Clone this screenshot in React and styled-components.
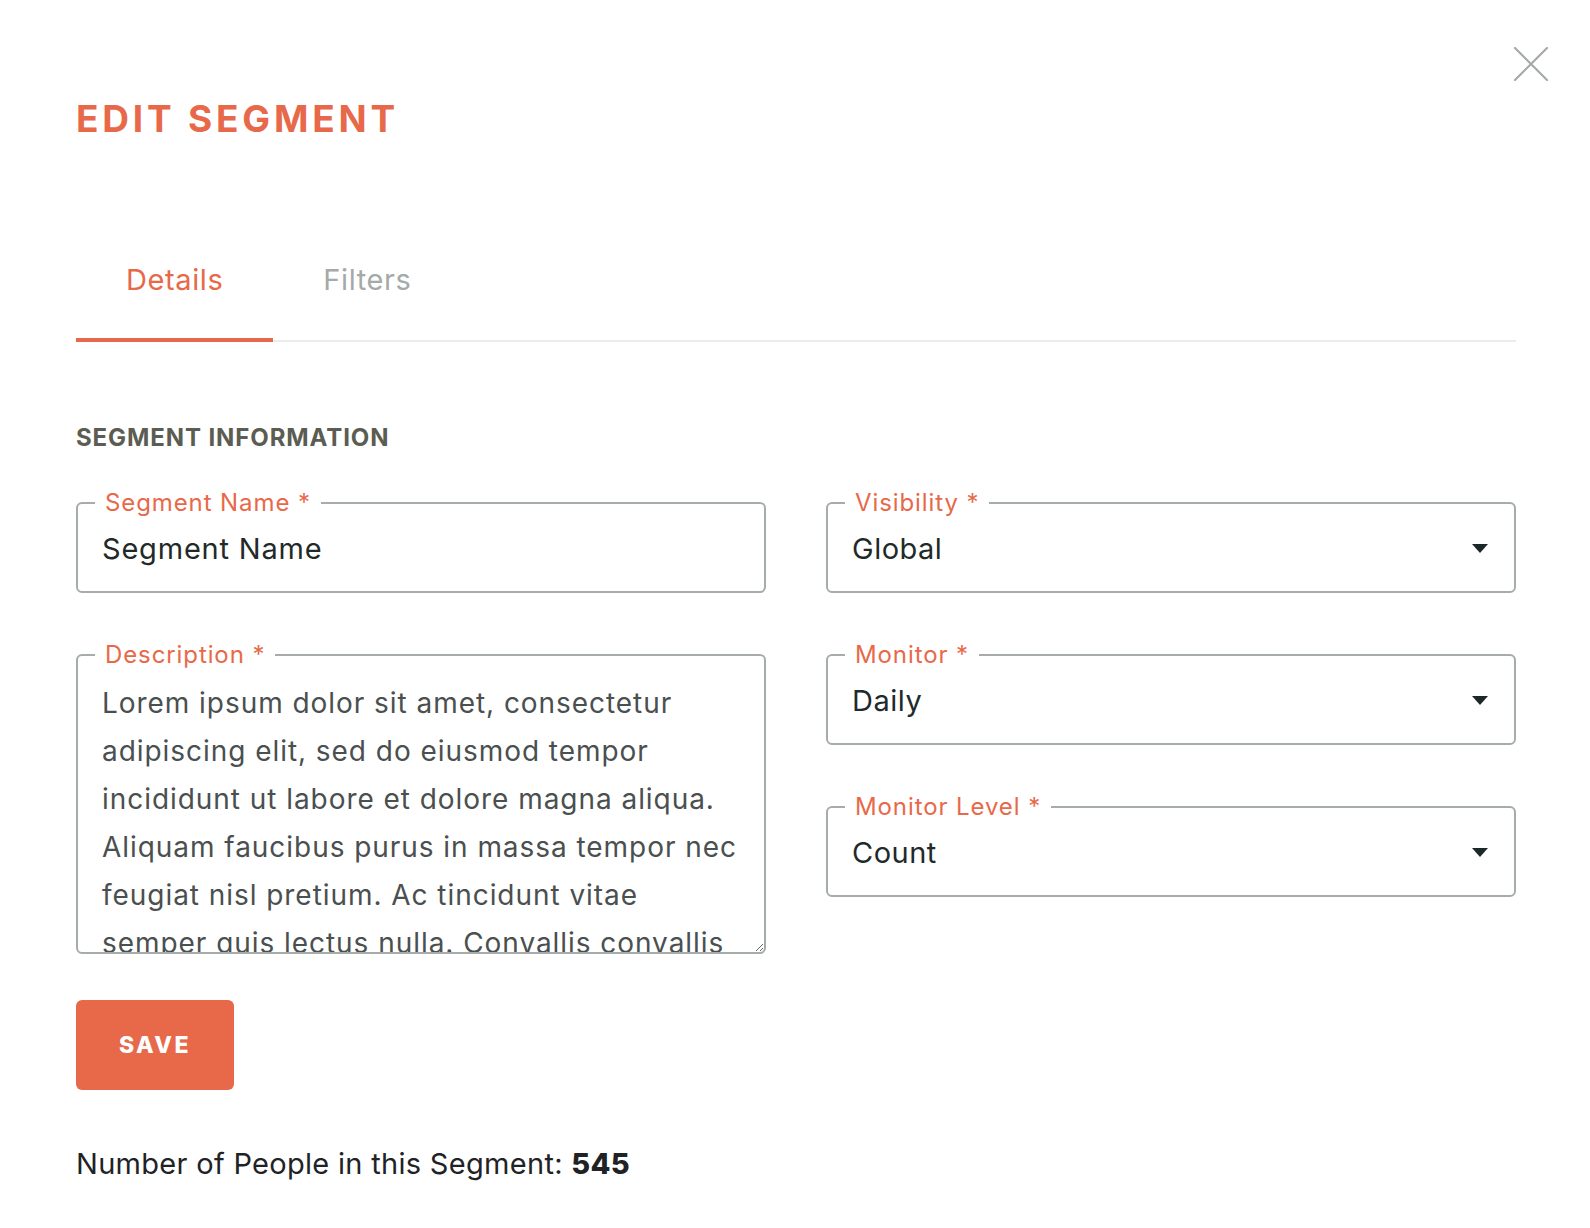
import { useState } from "react";
import styled, { createGlobalStyle } from "styled-components";

const GlobalStyle = createGlobalStyle`
  html, body {
    margin: 0;
    padding: 0;
    background: #ffffff;
  }
  body {
    font-family: "Inter", "Open Sans", sans-serif;
    color: #1f2a2a;
  }
`;

const ORANGE = "#e7694a";
const BORDER = "#a5acaa";

const Modal = styled.div`
  position: relative;
  box-sizing: border-box;
  width: 1590px;
  min-height: 1228px;
  padding: 96px 74px 60px 76px;
`;

const CloseButton = styled.button`
  position: absolute;
  top: 45px;
  right: 40px;
  width: 38px;
  height: 38px;
  padding: 0;
  border: none;
  background: none;
  cursor: pointer;
`;

const Title = styled.h1`
  margin: 0;
  font-size: 37px;
  line-height: 46px;
  font-weight: 700;
  letter-spacing: 3.8px;
  color: ${ORANGE};
`;

const Tabs = styled.div`
  display: flex;
  margin-top: 121px;
  border-bottom: 2px solid #ececec;
`;

const Tab = styled.div`
  padding: 0 50px 41px;
  margin-bottom: -2px;
  font-size: 29px;
  line-height: 34px;
  letter-spacing: 0.6px;
  color: ${(p) => (p.$active ? ORANGE : "#a4aaa8")};
  border-bottom: 4px solid ${(p) => (p.$active ? ORANGE : "transparent")};
  cursor: pointer;
`;

const SectionTitle = styled.h2`
  margin: 81px 0 0;
  font-size: 24px;
  line-height: 30px;
  font-weight: 700;
  letter-spacing: 0.9px;
  color: #5b5c52;
`;

const Grid = styled.div`
  display: grid;
  grid-template-columns: 1fr 1fr;
  column-gap: 60px;
  margin-top: 36px;
`;

const Column = styled.div`
  display: flex;
  flex-direction: column;
  gap: 48px;
`;

const Field = styled.fieldset`
  margin: 0;
  padding: 0;
  border: 2px solid ${BORDER};
  border-radius: 6px;
  min-width: 0;
`;

const Legend = styled.legend`
  margin-left: 17px;
  padding: 0 10px;
  font-size: 24px;
  line-height: 28px;
  letter-spacing: 0.9px;
  color: ${ORANGE};
`;

const TextInput = styled.input`
  box-sizing: border-box;
  width: 100%;
  height: 74px;
  padding: 0 24px 12px;
  border: none;
  outline: none;
  background: transparent;
  font-family: inherit;
  font-size: 29px;
  letter-spacing: 0.8px;
  color: #1f2a2a;
`;

const TextArea = styled.textarea`
  display: block;
  box-sizing: border-box;
  width: 100%;
  height: 283px;
  padding: 10px 24px 0;
  border: none;
  outline: none;
  background: transparent;
  font-family: inherit;
  font-size: 28px;
  letter-spacing: 0.95px;
  line-height: 48px;
  color: #4a4f50;
  resize: vertical;
  overflow: hidden;
`;

const SelectBox = styled.div`
  display: flex;
  align-items: center;
  justify-content: space-between;
  height: 74px;
  padding: 0 26px 12px 24px;
  box-sizing: border-box;
  font-size: 29px;
  letter-spacing: 0.5px;
  color: #1f2a2a;
  cursor: pointer;
`;

const SaveButton = styled.button`
  margin-top: 46px;
  width: 158px;
  height: 90px;
  border: none;
  border-radius: 6px;
  background: ${ORANGE};
  color: #ffffff;
  font-family: inherit;
  font-size: 23px;
  font-weight: 800;
  letter-spacing: 2.5px;
  cursor: pointer;
`;

const Count = styled.p`
  margin: 56px 0 0;
  font-size: 29px;
  line-height: 36px;
  letter-spacing: 0.3px;
  color: #1f2326;

  b {
    font-weight: 800;
  }
`;

const CloseIcon = () => (
  <svg width="38" height="38" viewBox="0 0 38 38">
    <path
      d="M3 3 L35 35 M35 3 L3 35"
      stroke="#a4aba7"
      strokeWidth="2.2"
      strokeLinecap="round"
    />
  </svg>
);

const Caret = () => (
  <svg width="16" height="9" viewBox="0 0 16 9">
    <path d="M0 0 H16 L8 9 Z" fill="#1c2828" />
  </svg>
);

const Select = ({ label, value }) => (
  <Field>
    <Legend>{label} *</Legend>
    <SelectBox>
      <span>{value}</span>
      <Caret />
    </SelectBox>
  </Field>
);

const description =
  "Lorem ipsum dolor sit amet, consectetur adipiscing elit, sed do eiusmod tempor incididunt ut labore et dolore magna aliqua. Aliquam faucibus purus in massa tempor nec feugiat nisl pretium. Ac tincidunt vitae semper quis lectus nulla. Convallis convallis tellus id interdum velit laoreet id donec.";

const App = () => {
  const [tab, setTab] = useState("details");

  return (
    <>
      <GlobalStyle />
      <Modal>
        <CloseButton aria-label="Close">
          <CloseIcon />
        </CloseButton>
        <Title>EDIT SEGMENT</Title>
        <Tabs>
          <Tab $active={tab === "details"} onClick={() => setTab("details")}>
            Details
          </Tab>
          <Tab $active={tab === "filters"} onClick={() => setTab("filters")}>
            Filters
          </Tab>
        </Tabs>
        <SectionTitle>SEGMENT INFORMATION</SectionTitle>
        <Grid>
          <Column>
            <Field>
              <Legend>Segment Name *</Legend>
              <TextInput defaultValue="Segment Name" />
            </Field>
            <Field>
              <Legend>Description *</Legend>
              <TextArea defaultValue={description} />
            </Field>
          </Column>
          <Column>
            <Select label="Visibility" value="Global" />
            <Select label="Monitor" value="Daily" />
            <Select label="Monitor Level" value="Count" />
          </Column>
        </Grid>
        <SaveButton>SAVE</SaveButton>
        <Count>
          Number of People in this Segment: <b>545</b>
        </Count>
      </Modal>
    </>
  );
};

export default App;
